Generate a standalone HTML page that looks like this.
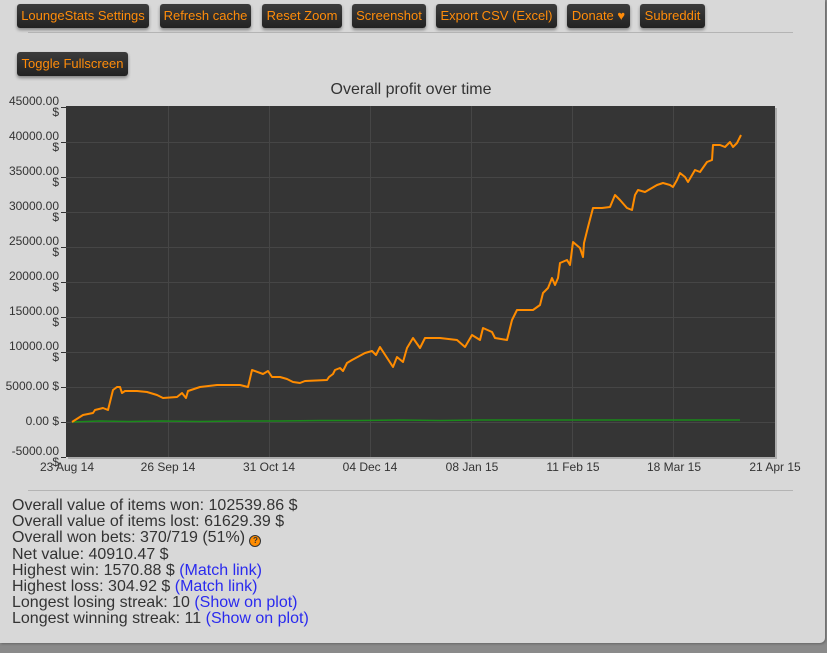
<!DOCTYPE html>
<html><head><meta charset="utf-8"><style>
html,body{margin:0;padding:0;width:827px;height:653px;overflow:hidden;background:#8a8a8a;font-family:"Liberation Sans",Arial,sans-serif;}
#panel{position:absolute;left:0;top:0;width:825px;height:643px;background:#d8d8d8;border-radius:0 0 5px 0;box-shadow:1px 1px 2px #666;}
.btn{position:absolute;height:24px;line-height:23px;top:4px;background:linear-gradient(#3c3c3c,#222);color:#ff8c0a;font-size:13px;border-radius:3px;text-align:center;box-shadow:0 2px 3px rgba(0,0,0,.4);}
.hr{position:absolute;left:28px;width:765px;height:1px;background:#b4b4b4;}
.yl{position:absolute;right:766px;font-size:12px;color:#333;text-align:right;line-height:11px;}
.xl{position:absolute;top:460px;font-size:12px;color:#333;width:80px;margin-left:-40px;text-align:center;}
#stats{position:absolute;left:12px;top:498px;font-size:16px;color:#333;line-height:16px;}
#stats a{color:#2a2aee;text-decoration:none;}
.q{display:inline-block;width:10px;height:10px;border-radius:50%;background:#ff8c00;border:1px solid #333;font-size:8px;line-height:10px;text-align:center;vertical-align:-1px;color:#333;font-weight:bold}
</style></head><body>
<div id="panel">
<div class="btn" style="left:17px;width:132px">LoungeStats Settings</div>
<div class="btn" style="left:160px;width:91px">Refresh cache</div>
<div class="btn" style="left:262px;width:80px">Reset Zoom</div>
<div class="btn" style="left:352px;width:74px">Screenshot</div>
<div class="btn" style="left:436px;width:121px">Export CSV (Excel)</div>
<div class="btn" style="left:567px;width:63px">Donate ♥</div>
<div class="btn" style="left:640px;width:65px">Subreddit</div>
<div class="hr" style="top:32px"></div>
<div class="btn" style="left:17px;top:52px;width:111px">Toggle Fullscreen</div>
<div style="position:absolute;left:0;width:822px;top:81px;text-align:center;font-size:16px;color:#333">Overall profit over time</div>

<svg style="position:absolute;left:0;top:0" width="827" height="500">
<rect x="68" y="108" width="709" height="351" fill="#000" opacity=".2"/>
<rect x="66" y="106" width="709" height="351" fill="#353535"/>
<g stroke="#464646" stroke-width="1">
<line x1="66" x2="775" y1="142.5" y2="142.5"/><line x1="66" x2="775" y1="177.5" y2="177.5"/><line x1="66" x2="775" y1="212.5" y2="212.5"/><line x1="66" x2="775" y1="247.5" y2="247.5"/><line x1="66" x2="775" y1="282.5" y2="282.5"/><line x1="66" x2="775" y1="317.5" y2="317.5"/><line x1="66" x2="775" y1="352.5" y2="352.5"/><line x1="66" x2="775" y1="387.5" y2="387.5"/><line x1="66" x2="775" y1="422.5" y2="422.5"/>
<line y1="106" y2="457" x1="168.5" x2="168.5"/><line y1="106" y2="457" x1="269.5" x2="269.5"/><line y1="106" y2="457" x1="370.5" x2="370.5"/><line y1="106" y2="457" x1="471.5" x2="471.5"/><line y1="106" y2="457" x1="572.5" x2="572.5"/><line y1="106" y2="457" x1="673.5" x2="673.5"/>
</g>
<g stroke="#333"><line x1="61" x2="66" y1="107.5" y2="107.5"/><line x1="61" x2="66" y1="142.5" y2="142.5"/><line x1="61" x2="66" y1="177.5" y2="177.5"/><line x1="61" x2="66" y1="212.5" y2="212.5"/><line x1="61" x2="66" y1="247.5" y2="247.5"/><line x1="61" x2="66" y1="282.5" y2="282.5"/><line x1="61" x2="66" y1="317.5" y2="317.5"/><line x1="61" x2="66" y1="352.5" y2="352.5"/><line x1="61" x2="66" y1="387.5" y2="387.5"/><line x1="61" x2="66" y1="422.5" y2="422.5"/><line x1="61" x2="66" y1="457.5" y2="457.5"/></g>
<polyline fill="none" stroke="#1a8a1a" stroke-width="1.5" points="72,422 100,421 130,421.5 160,421 200,421.5 240,421 280,421 320,420.5 360,420.5 400,420 440,420.5 480,420 520,420 560,420 600,420 640,420 680,420 720,420 740,420"/>
<polyline fill="none" stroke="#ff8c00" stroke-width="2" stroke-linejoin="round" points="72,422 83,415 93,413 95,410 103,408 108,410 113,390 117,387 120,387 122,393 125,391 137,391 147,392 157,395 163,398 177,397 182,393 186,398 188,391 200,387 217,385 240,385 248,387 252,370 263,374 268,371 272,377 280,377 287,379 293,382 300,383 305,381 327,380 329,377 333,374 335,370 340,368 343,371 347,363 352,360 365,353 372,351 376,355 380,347 393,367 397,357 403,362 407,348 413,338 420,348 425,338 440,338 457,340 465,347 472,335 480,340 483,328 492,332 495,338 507,340 512,320 517,310 523,310 533,310 540,305 543,293 548,288 552,278 555,285 558,278 560,263 567,260 570,265 573,242 580,248 583,257 584,243 588,227 593,208 602,208 610,207 615,195 620,200 627,208 632,210 635,195 638,190 645,192 657,185 663,183 670,185 673,187 677,180 680,173 685,177 688,182 695,170 700,172 707,162 712,160 713,145 720,145 725,147 730,142 733,147 737,143 741,135"/>
</svg>

<div class="yl" style="top:96px">45000.00<br>$</div>
<div class="yl" style="top:131px">40000.00<br>$</div>
<div class="yl" style="top:166px">35000.00<br>$</div>
<div class="yl" style="top:201px">30000.00<br>$</div>
<div class="yl" style="top:236px">25000.00<br>$</div>
<div class="yl" style="top:271px">20000.00<br>$</div>
<div class="yl" style="top:306px">15000.00<br>$</div>
<div class="yl" style="top:341px">10000.00<br>$</div>
<div class="yl" style="top:381px">5000.00 $</div>
<div class="yl" style="top:416px">0.00 $</div>
<div class="yl" style="top:446px">-5000.00<br>$</div>

<div class="xl" style="left:67px">23 Aug 14</div>
<div class="xl" style="left:168px">26 Sep 14</div>
<div class="xl" style="left:269px">31 Oct 14</div>
<div class="xl" style="left:370px">04 Dec 14</div>
<div class="xl" style="left:472px">08 Jan 15</div>
<div class="xl" style="left:573px">11 Feb 15</div>
<div class="xl" style="left:674px">18 Mar 15</div>
<div class="xl" style="left:775px">21 Apr 15</div>

<div class="hr" style="top:490px"></div>
<div id="stats">
Overall value of items won: 102539.86 $<br>
Overall value of items lost: 61629.39 $<br>
Overall won bets: 370/719 (51%) <span class="q">?</span><br>
Net value: 40910.47 $<br>
Highest win: 1570.88 $ <a>(Match link)</a><br>
Highest loss: 304.92 $ <a>(Match link)</a><br>
Longest losing streak: 10 <a>(Show on plot)</a><br>
Longest winning streak: 11 <a>(Show on plot)</a>
</div>
</div>
</body></html>
